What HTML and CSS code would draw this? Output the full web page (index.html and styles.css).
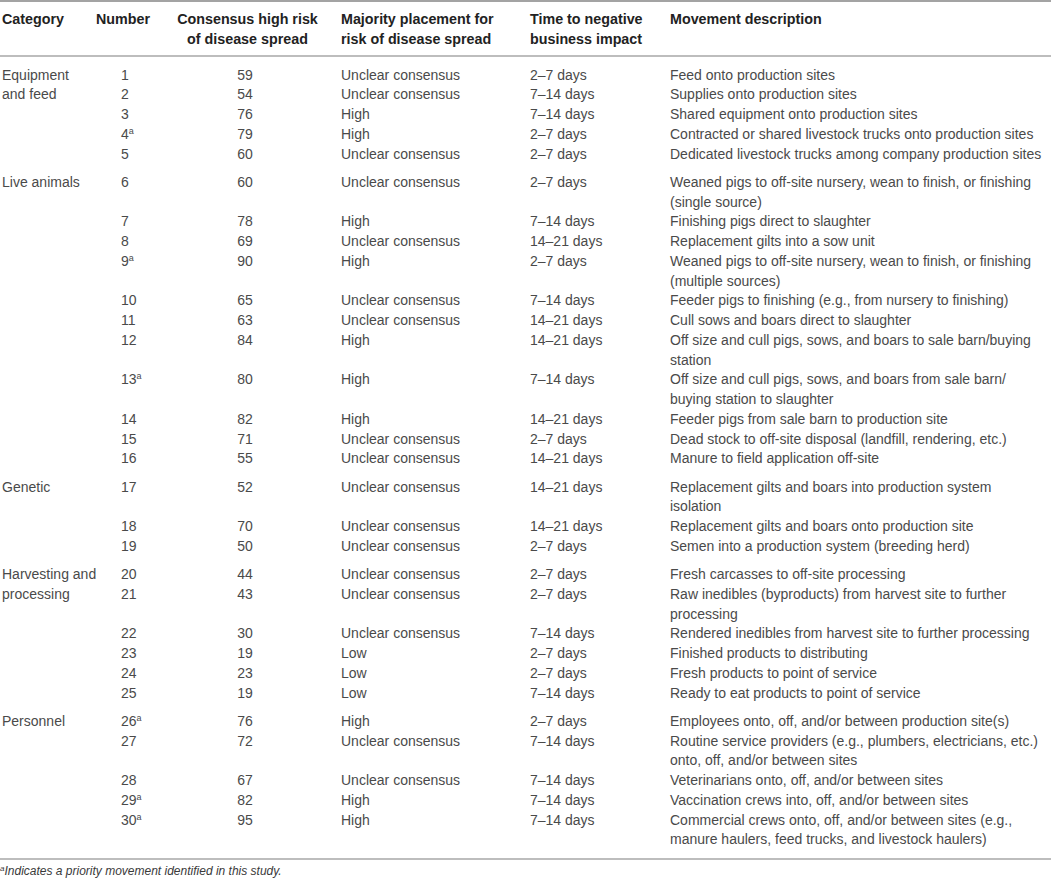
FILE: index.html
```html
<!DOCTYPE html>
<html lang="en">
<head>
<meta charset="utf-8">
<title>Movements</title>
<link rel="stylesheet" href="styles.css">
</head>
<body>
<table class="data">
  <colgroup>
    <col class="c-cat">
    <col class="c-num">
    <col class="c-cons">
    <col class="c-maj">
    <col class="c-time">
    <col class="c-desc">
  </colgroup>
  <thead>
    <tr>
      <th>Category</th>
      <th>Number</th>
      <th class="center">Consensus high risk<br>of disease spread</th>
      <th>Majority placement for<br>risk of disease spread</th>
      <th>Time to negative<br>business impact</th>
      <th>Movement description</th>
    </tr>
  </thead>
  <tbody>
    <tr class="first">
      <td class="cat" rowspan="5">Equipment<br>and feed</td>
      <td class="num">1</td><td class="cons">59</td><td>Unclear consensus</td><td>2–7 days</td><td>Feed onto production sites</td>
    </tr>
    <tr><td class="num">2</td><td class="cons">54</td><td>Unclear consensus</td><td>7–14 days</td><td>Supplies onto production sites</td></tr>
    <tr><td class="num">3</td><td class="cons">76</td><td>High</td><td>7–14 days</td><td>Shared equipment onto production sites</td></tr>
    <tr><td class="num">4<sup class="fn">a</sup></td><td class="cons">79</td><td>High</td><td>2–7 days</td><td>Contracted or shared livestock trucks onto production sites</td></tr>
    <tr><td class="num">5</td><td class="cons">60</td><td>Unclear consensus</td><td>2–7 days</td><td>Dedicated livestock trucks among company production sites</td></tr>

    <tr class="first">
      <td class="cat" rowspan="11">Live animals</td>
      <td class="num">6</td><td class="cons">60</td><td>Unclear consensus</td><td>2–7 days</td><td>Weaned pigs to off-site nursery, wean to finish, or finishing<br>(single source)</td>
    </tr>
    <tr><td class="num">7</td><td class="cons">78</td><td>High</td><td>7–14 days</td><td>Finishing pigs direct to slaughter</td></tr>
    <tr><td class="num">8</td><td class="cons">69</td><td>Unclear consensus</td><td>14–21 days</td><td>Replacement gilts into a sow unit</td></tr>
    <tr><td class="num">9<sup class="fn">a</sup></td><td class="cons">90</td><td>High</td><td>2–7 days</td><td>Weaned pigs to off-site nursery, wean to finish, or finishing<br>(multiple sources)</td></tr>
    <tr><td class="num">10</td><td class="cons">65</td><td>Unclear consensus</td><td>7–14 days</td><td>Feeder pigs to finishing (e.g., from nursery to finishing)</td></tr>
    <tr><td class="num">11</td><td class="cons">63</td><td>Unclear consensus</td><td>14–21 days</td><td>Cull sows and boars direct to slaughter</td></tr>
    <tr><td class="num">12</td><td class="cons">84</td><td>High</td><td>14–21 days</td><td>Off size and cull pigs, sows, and boars to sale barn/buying<br>station</td></tr>
    <tr><td class="num">13<sup class="fn">a</sup></td><td class="cons">80</td><td>High</td><td>7–14 days</td><td>Off size and cull pigs, sows, and boars from sale barn/<br>buying station to slaughter</td></tr>
    <tr><td class="num">14</td><td class="cons">82</td><td>High</td><td>14–21 days</td><td>Feeder pigs from sale barn to production site</td></tr>
    <tr><td class="num">15</td><td class="cons">71</td><td>Unclear consensus</td><td>2–7 days</td><td>Dead stock to off-site disposal (landfill, rendering, etc.)</td></tr>
    <tr><td class="num">16</td><td class="cons">55</td><td>Unclear consensus</td><td>14–21 days</td><td>Manure to field application off-site</td></tr>

    <tr class="first">
      <td class="cat" rowspan="3">Genetic</td>
      <td class="num">17</td><td class="cons">52</td><td>Unclear consensus</td><td>14–21 days</td><td>Replacement gilts and boars into production system<br>isolation</td>
    </tr>
    <tr><td class="num">18</td><td class="cons">70</td><td>Unclear consensus</td><td>14–21 days</td><td>Replacement gilts and boars onto production site</td></tr>
    <tr><td class="num">19</td><td class="cons">50</td><td>Unclear consensus</td><td>2–7 days</td><td>Semen into a production system (breeding herd)</td></tr>

    <tr class="first">
      <td class="cat" rowspan="6">Harvesting and<br>processing</td>
      <td class="num">20</td><td class="cons">44</td><td>Unclear consensus</td><td>2–7 days</td><td>Fresh carcasses to off-site processing</td>
    </tr>
    <tr><td class="num">21</td><td class="cons">43</td><td>Unclear consensus</td><td>2–7 days</td><td>Raw inedibles (byproducts) from harvest site to further<br>processing</td></tr>
    <tr><td class="num">22</td><td class="cons">30</td><td>Unclear consensus</td><td>7–14 days</td><td>Rendered inedibles from harvest site to further processing</td></tr>
    <tr><td class="num">23</td><td class="cons">19</td><td>Low</td><td>2–7 days</td><td>Finished products to distributing</td></tr>
    <tr><td class="num">24</td><td class="cons">23</td><td>Low</td><td>2–7 days</td><td>Fresh products to point of service</td></tr>
    <tr><td class="num">25</td><td class="cons">19</td><td>Low</td><td>7–14 days</td><td>Ready to eat products to point of service</td></tr>

    <tr class="first">
      <td class="cat" rowspan="5">Personnel</td>
      <td class="num">26<sup class="fn">a</sup></td><td class="cons">76</td><td>High</td><td>2–7 days</td><td>Employees onto, off, and/or between production site(s)</td>
    </tr>
    <tr><td class="num">27</td><td class="cons">72</td><td>Unclear consensus</td><td>7–14 days</td><td>Routine service providers (e.g., plumbers, electricians, etc.)<br>onto, off, and/or between sites</td></tr>
    <tr><td class="num">28</td><td class="cons">67</td><td>Unclear consensus</td><td>7–14 days</td><td>Veterinarians onto, off, and/or between sites</td></tr>
    <tr><td class="num">29<sup class="fn">a</sup></td><td class="cons">82</td><td>High</td><td>7–14 days</td><td>Vaccination crews into, off, and/or between sites</td></tr>
    <tr class="last"><td class="num">30<sup class="fn">a</sup></td><td class="cons">95</td><td>High</td><td>7–14 days</td><td>Commercial crews onto, off, and/or between sites (e.g.,<br>manure haulers, feed trucks, and livestock haulers)</td></tr>
  </tbody>
</table>
<p class="footnote"><sup class="fn">a</sup>Indicates a priority movement identified in this study.</p>
</body>
</html>
```

FILE: styles.css
```css
html, body {
  margin: 0;
  padding: 0;
  background: #ffffff;
}

body {
  font-family: "Liberation Sans", Arial, sans-serif;
  color: #4a4a4a;
}

.data {
  width: 1051px;
  border-collapse: collapse;
  table-layout: fixed;
  font-size: 14px;
  line-height: 19.75px;
  border-top: 2px solid #a3a3a3;
  border-bottom: 2px solid #bdbdbd;
}

.c-cat { width: 94px; }
.c-num { width: 80px; }
.c-cons { width: 165px; }
.c-maj { width: 189px; }
.c-time { width: 140px; }
.c-desc { width: 383px; }

.data th {
  font-weight: bold;
  font-size: 14.3px;
  color: #222222;
  text-align: left;
  vertical-align: top;
  line-height: 20px;
  padding: 7px 0 6px 2px;
  border-bottom: 2px solid #bdbdbd;
  white-space: nowrap;
}

.data th.center {
  text-align: center;
  padding-right: 20px;
}

.data td {
  vertical-align: top;
  padding: 0 0 0 2px;
  white-space: nowrap;
}

.data tr.first td {
  padding-top: 8.5px;
}

.data tr.last td {
  padding-bottom: 8px;
}

.data td.num {
  padding-left: 27px;
}

.data td.cons {
  text-align: center;
  padding-right: 25px;
}

.fn {
  font-size: 9px;
  line-height: 0;
  vertical-align: 5px;
}

.footnote {
  margin: 3px 0 0 0;
  font-size: 12px;
  line-height: 16px;
  font-style: italic;
  color: #3a3a3a;
}

.footnote .fn {
  font-size: 8px;
  vertical-align: 4px;
}
```
